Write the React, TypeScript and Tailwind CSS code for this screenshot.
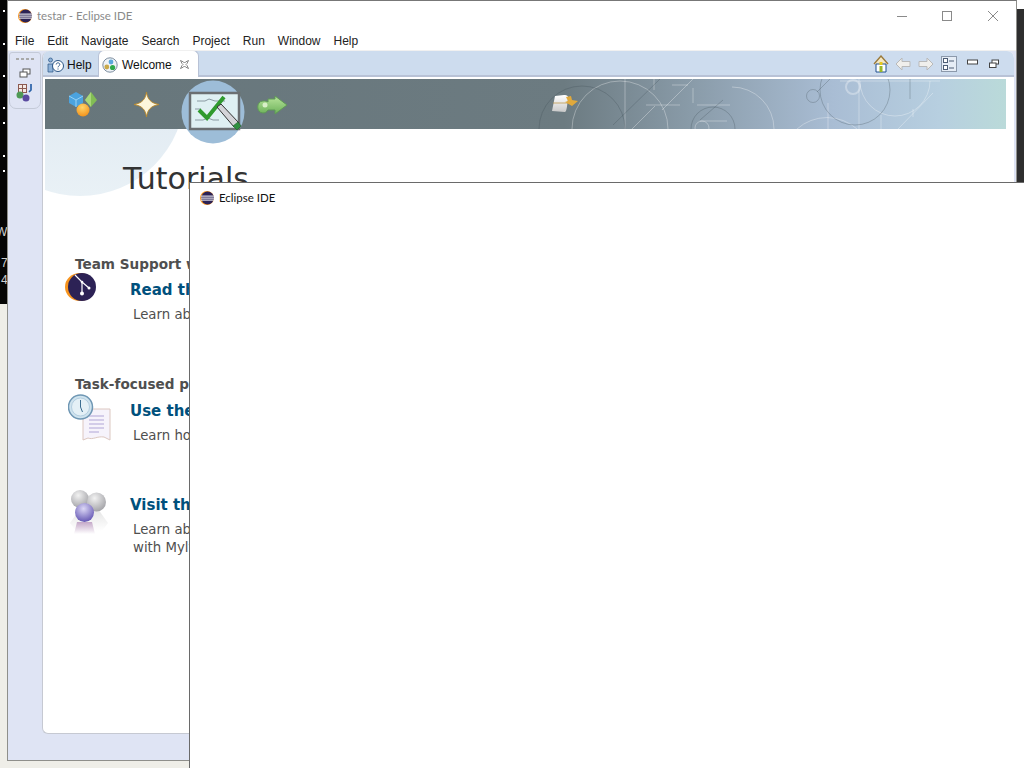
const sans = "font-['Liberation_Sans',sans-serif]";

const EclipseLogo = ({ size = 14 }: { size?: number }) => (
  <svg width={size} height={size} viewBox="0 0 14 14" className="shrink-0">
    <circle cx="7" cy="7" r="7" fill="#f7941e" />
    <circle cx="7.6" cy="7" r="6.4" fill="#2c2255" />
    <rect x="1" y="4.6" width="13" height="1" fill="#fff" />
    <rect x="1" y="6.6" width="13" height="1" fill="#fff" />
    <rect x="1" y="8.6" width="13" height="1" fill="#fff" />
  </svg>
);

const MENU = ["File", "Edit", "Navigate", "Search", "Project", "Run", "Window", "Help"];

const Banner = () => (
  <svg width="961" height="50" viewBox="0 0 961 50" className="block">
    <defs>
      <linearGradient id="ban" x1="0" x2="1" y1="0" y2="0">
        <stop offset="0" stopColor="#67767b" />
        <stop offset="0.54" stopColor="#6c7b81" />
        <stop offset="0.68" stopColor="#8b9dab" />
        <stop offset="0.82" stopColor="#a9bdd4" />
        <stop offset="0.93" stopColor="#b7cfe0" />
        <stop offset="1" stopColor="#badad9" />
      </linearGradient>
      <linearGradient id="rib" x1="0" x2="0" y1="0" y2="1">
        <stop offset="0" stopColor="#fff" />
        <stop offset="1" stopColor="#c9c9c9" />
      </linearGradient>
    </defs>
    <rect width="961" height="50" fill="url(#ban)" />
    <g fill="none" stroke="#fff" strokeOpacity="0.32">
      <circle cx="575" cy="50" r="48" />
      <path d="M580 0V50M587 50l23-23M601 26h34M617 31l31-31M627 6h16M609 0v11M648 9v15M652 26h33M655 42h27" />
      <circle cx="657" cy="49" r="7" />
      <path d="M687 8a42 42 0 0 1 42 42" />
      <path d="M795 2h100M814 0v50M783 24v26M752 50a45 45 0 0 1 60 0" />
      <circle cx="808" cy="8" r="7" strokeWidth="2" />
      <path d="M815 2a35 35 0 0 0 70 0M888 14l-35 36M836 36v14M868 30v8" />
    </g>
    <g fill="none" stroke="#3d4a52" strokeOpacity="0.28">
      <circle cx="537" cy="50" r="43" />
      <path d="M568 46l47-46M655 41l23-20" />
      <circle cx="668" cy="50" r="22" />
      <circle cx="768" cy="17" r="6.500" />
      <path d="M772 13l13-13" />
      <circle cx="810" cy="11" r="35" />
      <path d="M865 0v20" />
    </g>
    <path d="M510 17 L507 32 L520 33 C522 32 522 26 523 20 C524 17 522 16 519 16Z" fill="url(#rib)" />
    <path d="M508 24h15" stroke="#b98f3a" strokeWidth="0.7" />
    <path d="M521 18l5-1 1 4 6 1-6 5-7-4 3-1z" fill="#e0a93c" />
  </svg>
);

const NavIcons = () => (
  <div className="absolute left-0 top-0 h-[70px] w-[260px]">
    <svg width="260" height="70" viewBox="0 0 260 70">
      <defs>
        <radialGradient id="ora" cx="0.45" cy="0.3" r="0.8">
          <stop offset="0" stopColor="#ffd56b" />
          <stop offset="1" stopColor="#f08a12" />
        </radialGradient>
        <linearGradient id="arr" x1="0" x2="0" y1="0" y2="1">
          <stop offset="0" stopColor="#b8e49b" />
          <stop offset="1" stopColor="#6db25a" />
        </linearGradient>
      </defs>
      <path d="M24 17l7-4 7 4v7l-7 4-7-4z" fill="#4ba3df" />
      <path d="M31 21v7M24 17l7 4 7-4" stroke="#9ad2f3" fill="none" />
      <path d="M46 13l6 8-6 7-6-7z" fill="#82bd55" />
      <path d="M46 13v15l-6-7z" fill="#a9d77a" />
      <circle cx="38" cy="31" r="6.500" fill="url(#ora)" />
      <path d="M101.500 13c1 7 4 11 12.500 12.500-8.500 1.500-11.500 5.500-12.500 12.500-1-7-4-11-12.500-12.500 8.500-1.500 11.500-5.500 12.500-12.500z" fill="#fdf6dc" stroke="#b8892e" />
      <circle cx="168" cy="33" r="31.500" fill="#9dbdd8" />
      <rect x="145" y="14" width="49" height="36" fill="#dff0f3" stroke="#6b6f72" strokeWidth="2.500" />
      <path d="M152 22h8l4-2 6 2h10M150 30h6M150 41h8l5-2 5 2h6" stroke="#8a9aa2" fill="none" />
      <path d="M154 31l8 8 17-21" stroke="#2f9a2e" strokeWidth="4" fill="none" />
      <path d="M172 28l17 20 5-4-18-19z" fill="#d4d4d8" stroke="#333" />
      <path d="M188 47l5-4 3 4-4 4z" fill="#2f8f3f" stroke="#1f5f2a" strokeWidth="0.600" />
      <path d="M223 20h7v-3l12 9-12 9v-4h-7c-1 2-3 3-5 3-7 0-7-12 0-12 2 0 4 0 5 1z" fill="url(#arr)" stroke="#5f9a56" />
      <circle cx="220" cy="26" r="2.500" fill="#d9f0c8" />
    </svg>
  </div>
);

const Entry = ({
  heading,
  link,
  lines,
  icon,
  className,
}: {
  heading?: string;
  link: string;
  lines: string[];
  icon: React.ReactNode;
  className?: string;
}) => (
  <div className={className}>
    {heading && (
      <div className="pl-[30px] text-[13.6px] font-bold leading-[28px] text-[#4f4f4f]">{heading}</div>
    )}
    <div className="flex items-start">
      <div className="w-[85px] shrink-0 pl-[20px]">{icon}</div>
      <div>
        <div className="whitespace-nowrap text-[15px] font-bold leading-[24px] text-[#00507c]">{link}</div>
        <div className="pl-[3px] pt-[4px] text-[13.3px] leading-[18px] text-[#4f4f4f]">
          {lines.map((l) => (
            <div key={l} className="whitespace-nowrap">{l}</div>
          ))}
        </div>
      </div>
    </div>
  </div>
);

const GitIcon = () => (
  <svg width="32" height="28" viewBox="0 0 32 28" className="-mt-[5px]">
    <ellipse cx="15" cy="14" rx="15" ry="14" fill="#f7941e" />
    <ellipse cx="17" cy="14" rx="14" ry="14" fill="#2c2255" />
    <path d="M10 2l7 7v11M17 9l7 6" stroke="#fff" strokeWidth="1.200" fill="none" />
    <circle cx="17" cy="20.500" r="2" fill="#fff" />
    <circle cx="24" cy="15" r="1.500" fill="#fff" />
    <circle cx="17" cy="9" r="1.300" fill="#fff" />
  </svg>
);

const TaskIcon = () => (
  <svg width="44" height="48" viewBox="0 0 44 48" className="-mt-[5px] ml-[3px]">
    <path d="M15 15h27v31l-6-3c-7-1-11 3-16 1l-5 2z" fill="#f6f3fb" stroke="#dcc7c0" />
    <path d="M21 22h15M21 26h15M21 30h15M21 34h15M21 38h10" stroke="#b0a5d6" />
    <circle cx="12.500" cy="13" r="12" fill="#cfe3ee" stroke="#6f97b4" strokeWidth="1.500" />
    <circle cx="12.500" cy="13" r="9" fill="#e4f0f6" stroke="#a9c6da" strokeWidth="0.800" />
    <path d="M12.500 6v7l2 5" stroke="#3c6e91" fill="none" />
  </svg>
);

const CommunityIcon = () => (
  <svg width="40" height="46" viewBox="0 0 40 46" className="-mt-[4px] ml-[5px]">
    <defs>
      <radialGradient id="gr" cx="0.4" cy="0.3" r="0.8">
        <stop offset="0" stopColor="#f2f2f2" />
        <stop offset="1" stopColor="#9a9a9f" />
      </radialGradient>
      <radialGradient id="pu" cx="0.45" cy="0.3" r="0.8">
        <stop offset="0" stopColor="#dcd8f6" />
        <stop offset="1" stopColor="#5546ab" />
      </radialGradient>
      <linearGradient id="sh" x1="0" x2="0" y1="0" y2="1">
        <stop offset="0" stopColor="#c4a8c8" />
        <stop offset="1" stopColor="#fff" />
      </linearGradient>
      <linearGradient id="fl" x1="0" x2="0" y1="0" y2="1">
        <stop offset="0" stopColor="#e4e4e4" />
        <stop offset="1" stopColor="#fff" />
      </linearGradient>
    </defs>
    <path d="M0 34l10-14h18l10 14-6 8H6z" fill="url(#fl)" />
    <circle cx="10" cy="10" r="9" fill="url(#gr)" />
    <circle cx="26.500" cy="13" r="9.500" fill="url(#gr)" />
    <path d="M7 33h15l3 12H4z" fill="url(#sh)" />
    <circle cx="14.500" cy="23.500" r="9.500" fill="url(#pu)" />
  </svg>
);

export default function App() {
  return (
    <div className={`${sans} relative h-[768px] w-[1024px] overflow-hidden bg-[#efeee8]`}>
      {/* desktop behind the windows */}
      <div className="absolute left-0 top-0 h-[304px] w-[8px] overflow-hidden bg-[#050505] text-[12px] leading-[14px] text-[#cfcfcf]">
        {[10, 43, 75, 107, 122, 155, 170].map((y) => (
          <div key={y} className="absolute left-[3px] h-[2px] w-[2px] bg-white" style={{ top: y }} />
        ))}
        <span className="absolute -left-[4px] top-[225px]">W</span>
        <span className="absolute left-[1px] top-[256px]">7</span>
        <span className="absolute left-[1px] top-[273px]">4</span>
      </div>
      <div className="absolute right-0 top-0 h-[9px] w-[8px] bg-white" />
      <div className="absolute right-0 top-[9px] h-[180px] w-[8px] bg-[#2e2e2e]" />

      {/* main window */}
      <div className="absolute left-[7px] top-0 flex h-[761px] w-[1010px] flex-col border border-[#8f8f8b] border-t-[#777] bg-white">
        <div className="flex h-[30px] shrink-0 items-center pl-[10px]">
          <EclipseLogo />
          <span className="ml-[5px] font-['Lato',sans-serif] text-[11.5px] text-[#8a8a8a]">testar - Eclipse IDE</span>
          <div className="ml-auto flex items-center text-[#8a8a8a]">
            <svg width="12" height="12" viewBox="0 0 12 12" className="mr-[33px]"><path d="M1 6.500h10" stroke="currentColor" /></svg>
            <svg width="12" height="12" viewBox="0 0 12 12" className="mr-[34px]"><rect x="1.500" y="1.500" width="9" height="9" fill="none" stroke="currentColor" /></svg>
            <svg width="12" height="12" viewBox="0 0 12 12" className="mr-[17px]"><path d="M1 1l10 10M11 1L1 11" stroke="currentColor" /></svg>
          </div>
        </div>
        <div className="mt-[1px] flex h-[18px] shrink-0 items-center gap-[13px] pl-[7px] text-[12px] text-[#222]">
          {MENU.map((m) => <span key={m}>{m}</span>)}
        </div>

        <div className="flex min-h-0 flex-1 border-t border-[#f0f0f0] bg-[#dfe4f4]">
          {/* trim stack */}
          <div className="ml-[1px] mt-[1px] flex h-[57px] w-[32px] shrink-0 flex-col items-center rounded-b-[7px] rounded-t-[3px] border border-[#c4cad8] pt-[5px]">
            <div className="flex gap-[2px]">
              {[0, 1, 2, 3].map((i) => (
                <div key={i} className="h-[2px] w-[3px] bg-[#a9a9a9]" />
              ))}
            </div>
            <svg width="12" height="12" viewBox="0 0 12 12" className="mt-[7px]"><rect x="4" y="2" width="7" height="5" fill="#fff" stroke="#555" /><rect x="1" y="5" width="7" height="5" fill="#fff" stroke="#555" /></svg>
            <svg width="18" height="18" viewBox="0 0 18 18" className="mt-[5px]">
              <rect x="2.500" y="0.500" width="8" height="8" fill="#f4e9e4" stroke="#8c5a50" />
              <path d="M2.500 4.500h8M6.500 0.500v8" stroke="#8c5a50" fill="none" />
              <path d="M15 0v6l-2 2" stroke="#2a62a8" strokeWidth="1.700" fill="none" />
              <circle cx="4" cy="11" r="3.500" fill="#4f9a56" />
              <circle cx="10" cy="14" r="3.500" fill="#5a4aa0" />
            </svg>
          </div>

          {/* editor folder */}
          <div className="mb-[26px] ml-[1px] mr-[2px] flex min-w-0 flex-1 flex-col overflow-hidden rounded-b-[6px] rounded-t-[7px] border-b border-l border-[#c6c9d2] bg-white">
            <div className="flex h-[26px] shrink-0 items-end border-b-2 border-[#b8c2d6] bg-[#cddcee]">
              <div className="flex h-[24px] w-[55px] items-center gap-[3px] pl-[4px] pt-[3px] text-[12px] text-[#111]">
                <svg width="17" height="16" viewBox="0 0 17 16">
                  <circle cx="3.500" cy="3" r="2" fill="#8fb2d8" stroke="#2a5585" strokeWidth="0.700" />
                  <path d="M1 7h5v8H1z" fill="#8fb2d8" stroke="#2a5585" strokeWidth="0.700" />
                  <circle cx="11" cy="9" r="5.500" fill="#fff" stroke="#2a5585" />
                  <path d="M9.200 7.500c0-2.200 3.600-2.200 3.600 0 0 1.400-1.800 1.400-1.800 2.800M11 11.500v1" stroke="#2a5585" fill="none" />
                </svg>
                <span>Help</span>
              </div>
              <div className="-mb-[2px] flex h-[27px] w-[101px] items-center gap-[4px] rounded-t-[6px] border border-b-0 border-[#b8c2d6] bg-white pl-[3px] pt-[1px] text-[12px] text-[#111]">
                <svg width="16" height="16" viewBox="0 0 16 16">
                  <circle cx="8" cy="8" r="7.200" fill="#eef2f6" stroke="#7d8ea0" />
                  <circle cx="9" cy="5" r="2.400" fill="#5aa7db" />
                  <circle cx="4.800" cy="10" r="2.400" fill="#c9a94a" />
                  <circle cx="10.600" cy="10.500" r="2.600" fill="#2faa4a" />
                </svg>
                <span>Welcome</span>
                <svg width="11" height="11" viewBox="0 0 11 11" className="ml-[3px]">
                  <path d="M1.500 1.500l3 1.500 1 1 1-1 3-1.500-1.500 3-1 1 1 1 1.500 3-3-1.500-1-1-1 1-3 1.500 1.500-3 1-1-1-1z" fill="#fff" stroke="#777" strokeWidth="0.900" />
                </svg>
              </div>
              <div className="ml-auto mr-[15px] flex h-[24px] items-center pt-[2px]">
                <svg width="16" height="18" viewBox="0 0 16 18" className="mr-[6px]">
                  <path d="M1 9l7-8 7 8" fill="#f3e7c4" stroke="#9a7a3c" strokeWidth="1.400" />
                  <path d="M3 9v8h10V9z" fill="#fff" stroke="#1f4f8f" />
                  <rect x="6.500" y="11" width="3" height="6" fill="#9bb82a" />
                  <rect x="6.500" y="7" width="3" height="3" fill="#e7c91c" />
                </svg>
                <svg width="16" height="14" viewBox="0 0 16 14" className="mr-[7px]"><path d="M1 7l6-6v3.500h8v5H7V13z" fill="#f0efec" stroke="#b9b9b9" /></svg>
                <svg width="16" height="14" viewBox="0 0 16 14" className="mr-[7px]"><path d="M15 7L9 1v3.500H1v5h8V13z" fill="#f0efec" stroke="#b9b9b9" /></svg>
                <svg width="16" height="16" viewBox="0 0 16 16" className="mr-[10px]">
                  <rect x="0.500" y="0.500" width="15" height="15" fill="#e6edf6" stroke="#8c99ab" />
                  <rect x="2.500" y="2.500" width="4" height="4" fill="#fff" stroke="#4d5d75" />
                  <rect x="2.500" y="9.500" width="4" height="4" fill="#fff" stroke="#4d5d75" />
                  <path d="M8 5h5M8 12h5" stroke="#4d5d75" />
                </svg>
                <svg width="12" height="6" viewBox="0 0 12 6" className="-mt-[5px] mr-[10px]"><rect x="0.500" y="1" width="10" height="4" fill="#fff" stroke="#444" /></svg>
                <svg width="10" height="10" viewBox="0 0 10 10"><rect x="3" y="1" width="6.500" height="4" fill="#fff" stroke="#444" /><rect x="0.500" y="4" width="6.500" height="4.500" fill="#fff" stroke="#444" /></svg>
              </div>
            </div>

            <div className="relative min-h-0 flex-1 pl-[2px] pt-[2px]">
              <div className="absolute left-[2px] top-[52px] h-[68px] w-[140px] overflow-hidden">
                <div className="absolute -left-[70px] -top-[143px] h-[210px] w-[210px] rounded-full bg-linear-to-b from-[#d8e3ee] to-[#e9f1f6]" />
              </div>
              <Banner />
              <div className="absolute left-[2px] top-[2px]">
                <NavIcons />
              </div>
              <div className="relative pt-[30px]">
                <h1 className="pl-[78px] font-['DejaVu_Sans',sans-serif] text-[30px] leading-[40px] text-[#333]">Tutorials</h1>
                <div className="font-['DejaVu_Sans',sans-serif]">
                  <Entry className="mt-[51px]" heading="Team Support with Git" link="Read the EGit tutorial" lines={["Learn about Git"]} icon={<GitIcon />} />
                  <Entry className="mt-[46px] [&>div:first-child]:pb-[1px]" heading="Task-focused programming" link="Use the Mylyn tutorial" lines={["Learn how to use tasks"]} icon={<TaskIcon />} />
                  <Entry className="mt-[48px]" link="Visit the Mylyn site" lines={["Learn about Mylyn", "with Mylyn"]} icon={<CommunityIcon />} />
                </div>
              </div>
            </div>
          </div>
        </div>
      </div>

      {/* splash window, lies over the main one */}
      <div className="absolute left-[189px] top-[182px] h-[600px] w-[850px] border border-[#6a6a6a] bg-white">
        <div className="flex h-[30px] items-center pl-[10px]">
          <EclipseLogo />
          <span className="ml-[5px] font-['Lato',sans-serif] text-[11.5px] text-[#111]">Eclipse IDE</span>
        </div>
      </div>
    </div>
  );
}
